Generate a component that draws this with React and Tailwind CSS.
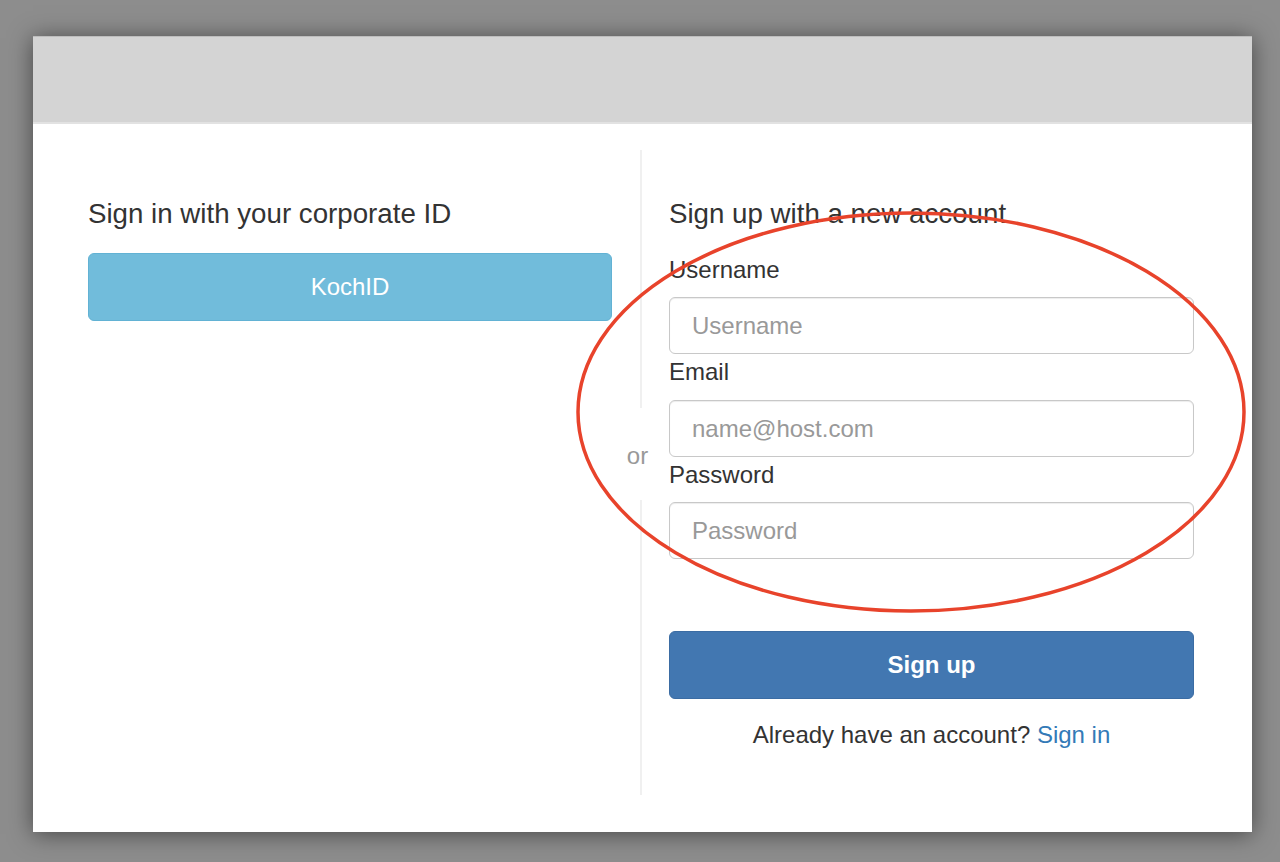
export default function App() {
  const font = { fontFamily: '"Liberation Sans", Arial, Helvetica, sans-serif' };
  return (
    <div className="relative w-[1280px] h-[862px] overflow-hidden bg-[#8d8d8d] pt-[36px] pl-[33px]" style={font}>
      <div className="w-[1219px] h-[796px] bg-white flex flex-col shadow-[0_2px_22px_rgba(0,0,0,0.5)]">
        <div className="h-[88px] bg-[#d4d4d4] border-t border-[#bdbdbd] border-b-2 border-b-[#e2e2e2]" />
        <div className="flex-1 flex pt-[26px] pb-[37px] pl-[55px] pr-[58px]">
          {/* Left column */}
          <div className="w-[524px] pt-[44px]">
            <h2 className="text-[27.7px] leading-[40px] text-[#333] mb-[19px]">Sign in with your corporate ID</h2>
            <button className="w-[524px] h-[68px] rounded-[6px] bg-[#71bcdb] border border-[#62b2d4] text-white text-[24px]">
              KochID
            </button>
          </div>
          {/* Divider */}
          <div className="w-[57px] flex flex-col items-center">
            <div className="w-[2px] h-[258px] bg-[#f0f0f0]" />
            <div className="h-[92px] pt-[4px] flex items-center text-[24px] text-[#999] -ml-[6px]">or</div>
            <div className="w-[2px] flex-1 bg-[#f0f0f0]" />
          </div>
          {/* Right column */}
          <div className="w-[525px] pt-[44px] text-[#333]">
            <h2 className="text-[27.7px] leading-[40px] mb-[18px]">Sign up with a new account</h2>
            <label className="block text-[24px] leading-[36px] mb-[9px]">Username</label>
            <input
              placeholder="Username"
              className="w-full h-[57px] rounded-[6px] border border-[#c8c8c8] px-[22px] text-[24px] placeholder-[#999] shadow-[inset_0_1px_1px_rgba(0,0,0,0.075)] outline-none"
            />
            <label className="block text-[24px] leading-[36px] mb-[10px]">Email</label>
            <input
              placeholder="name@host.com"
              className="w-full h-[57px] rounded-[6px] border border-[#c8c8c8] px-[22px] text-[24px] placeholder-[#999] shadow-[inset_0_1px_1px_rgba(0,0,0,0.075)] outline-none"
            />
            <label className="block text-[24px] leading-[36px] mb-[9px]">Password</label>
            <input
              type="password"
              placeholder="Password"
              className="w-full h-[57px] rounded-[6px] border border-[#c8c8c8] px-[22px] text-[24px] placeholder-[#999] shadow-[inset_0_1px_1px_rgba(0,0,0,0.075)] outline-none"
            />
            <button className="mt-[72px] w-full h-[68px] rounded-[6px] bg-[#4277b1] border border-[#3b6ca3] text-white text-[24px] font-bold">
              Sign up
            </button>
            <p className="mt-[18px] text-center text-[24px] leading-[36px]">
              Already have an account? <a className="text-[#337ab7]">Sign in</a>
            </p>
          </div>
        </div>
      </div>
      <svg className="absolute left-0 top-0 pointer-events-none" width="1280" height="862" viewBox="0 0 1280 862">
        <ellipse cx="911" cy="412" rx="333" ry="199" fill="none" stroke="#e8432b" strokeWidth="3.5" />
      </svg>
    </div>
  );
}
